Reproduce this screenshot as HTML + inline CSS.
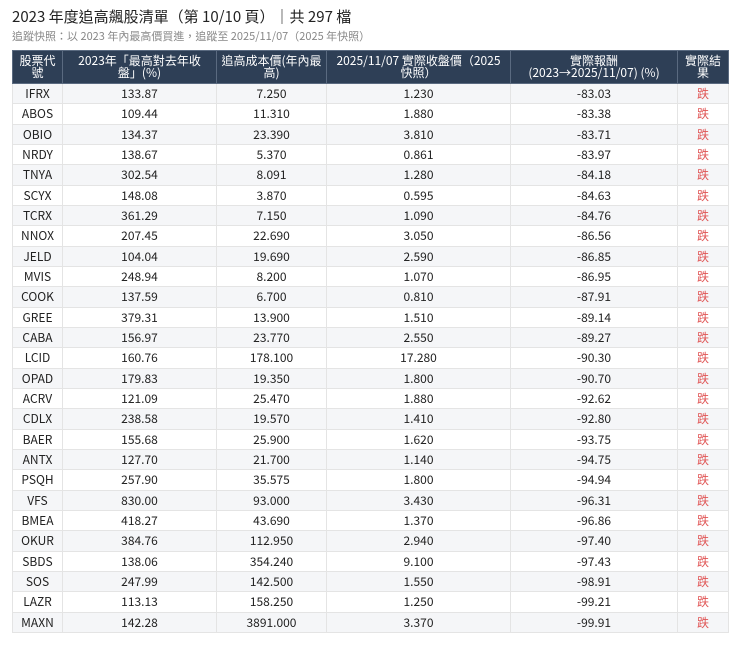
<!DOCTYPE html>
<html><head><meta charset="utf-8"><style>
body{margin:0;background:#fff;width:740px;height:645px;overflow:hidden;font-family:"Noto Sans CJK TC","Liberation Sans",sans-serif;color:#222}
h1{position:absolute;left:12px;top:7px;margin:0;font-size:15px;font-weight:400;line-height:20px}
.sub{position:absolute;left:12px;top:28px;font-size:11px;color:#888;line-height:16px}
table{position:absolute;left:12px;top:50px;border-collapse:collapse;font-size:12px;width:716px;table-layout:fixed}
th{background:#2e3f56;color:#fff;font-weight:400;font-size:12px;line-height:12px;height:33px;padding:0 2px;border:1px solid #5a6a80;box-sizing:border-box;white-space:nowrap}
td{height:20.33px;padding:0;text-align:center;border:1px solid #e4e4e4;line-height:19px;box-sizing:border-box}
tr:nth-child(even) td{background:#f5f6f8}
td.r{color:#e05555}
</style></head><body>
<h1>2023 年度追高飆股清單（第 10/10 頁）｜共 297 檔</h1>
<div class="sub">追蹤快照：以 2023 年內最高價買進，追蹤至 2025/11/07（2025 年快照）</div>
<table>
<colgroup><col style="width:50px"><col style="width:154px"><col style="width:110px"><col style="width:184px"><col style="width:167px"><col style="width:51px"></colgroup>
<tr><th>股票代<br>號</th><th>2023年「最高對去年收<br>盤」(%)</th><th>追高成本價(年內最<br>高)</th><th>2025/11/07 實際收盤價（2025<br>快照）</th><th>實際報酬<br>(2023→2025/11/07) (%)</th><th>實際結<br>果</th></tr>
<tr><td>IFRX</td><td>133.87</td><td>7.250</td><td>1.230</td><td>-83.03</td><td class="r">跌</td></tr>
<tr><td>ABOS</td><td>109.44</td><td>11.310</td><td>1.880</td><td>-83.38</td><td class="r">跌</td></tr>
<tr><td>OBIO</td><td>134.37</td><td>23.390</td><td>3.810</td><td>-83.71</td><td class="r">跌</td></tr>
<tr><td>NRDY</td><td>138.67</td><td>5.370</td><td>0.861</td><td>-83.97</td><td class="r">跌</td></tr>
<tr><td>TNYA</td><td>302.54</td><td>8.091</td><td>1.280</td><td>-84.18</td><td class="r">跌</td></tr>
<tr><td>SCYX</td><td>148.08</td><td>3.870</td><td>0.595</td><td>-84.63</td><td class="r">跌</td></tr>
<tr><td>TCRX</td><td>361.29</td><td>7.150</td><td>1.090</td><td>-84.76</td><td class="r">跌</td></tr>
<tr><td>NNOX</td><td>207.45</td><td>22.690</td><td>3.050</td><td>-86.56</td><td class="r">跌</td></tr>
<tr><td>JELD</td><td>104.04</td><td>19.690</td><td>2.590</td><td>-86.85</td><td class="r">跌</td></tr>
<tr><td>MVIS</td><td>248.94</td><td>8.200</td><td>1.070</td><td>-86.95</td><td class="r">跌</td></tr>
<tr><td>COOK</td><td>137.59</td><td>6.700</td><td>0.810</td><td>-87.91</td><td class="r">跌</td></tr>
<tr><td>GREE</td><td>379.31</td><td>13.900</td><td>1.510</td><td>-89.14</td><td class="r">跌</td></tr>
<tr><td>CABA</td><td>156.97</td><td>23.770</td><td>2.550</td><td>-89.27</td><td class="r">跌</td></tr>
<tr><td>LCID</td><td>160.76</td><td>178.100</td><td>17.280</td><td>-90.30</td><td class="r">跌</td></tr>
<tr><td>OPAD</td><td>179.83</td><td>19.350</td><td>1.800</td><td>-90.70</td><td class="r">跌</td></tr>
<tr><td>ACRV</td><td>121.09</td><td>25.470</td><td>1.880</td><td>-92.62</td><td class="r">跌</td></tr>
<tr><td>CDLX</td><td>238.58</td><td>19.570</td><td>1.410</td><td>-92.80</td><td class="r">跌</td></tr>
<tr><td>BAER</td><td>155.68</td><td>25.900</td><td>1.620</td><td>-93.75</td><td class="r">跌</td></tr>
<tr><td>ANTX</td><td>127.70</td><td>21.700</td><td>1.140</td><td>-94.75</td><td class="r">跌</td></tr>
<tr><td>PSQH</td><td>257.90</td><td>35.575</td><td>1.800</td><td>-94.94</td><td class="r">跌</td></tr>
<tr><td>VFS</td><td>830.00</td><td>93.000</td><td>3.430</td><td>-96.31</td><td class="r">跌</td></tr>
<tr><td>BMEA</td><td>418.27</td><td>43.690</td><td>1.370</td><td>-96.86</td><td class="r">跌</td></tr>
<tr><td>OKUR</td><td>384.76</td><td>112.950</td><td>2.940</td><td>-97.40</td><td class="r">跌</td></tr>
<tr><td>SBDS</td><td>138.06</td><td>354.240</td><td>9.100</td><td>-97.43</td><td class="r">跌</td></tr>
<tr><td>SOS</td><td>247.99</td><td>142.500</td><td>1.550</td><td>-98.91</td><td class="r">跌</td></tr>
<tr><td>LAZR</td><td>113.13</td><td>158.250</td><td>1.250</td><td>-99.21</td><td class="r">跌</td></tr>
<tr><td>MAXN</td><td>142.28</td><td>3891.000</td><td>3.370</td><td>-99.91</td><td class="r">跌</td></tr>
</table>
</body></html>
